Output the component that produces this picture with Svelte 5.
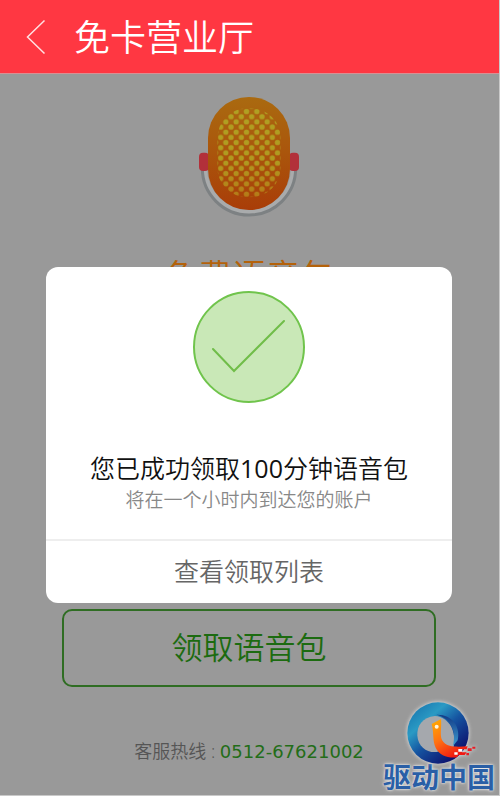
<script>
    let showDialog = $state(true);

    const hotline = '0512-67621002';
    const minutes = 100;

    function openDialog() {
        showDialog = true;
    }

    function closeDialog() {
        showDialog = false;
    }
</script>

<div class="screen">
    <header>
        <button class="back" aria-label="返回">
            <svg viewBox="0 0 20 36" width="20" height="36">
                <path d="M18.500 1.500 L1.500 18 L18.500 34.500" />
            </svg>
        </button>
        <h1>免卡营业厅</h1>
    </header>

    <main>
        <svg class="mic" viewBox="54 33 306 372" width="102" height="124" aria-hidden="true">
            <defs>
                <linearGradient id="micBody" x1="0" y1="0" x2="0" y2="1">
                    <stop offset="0" stop-color="#aa6a10" />
                    <stop offset="0.5" stop-color="#aa550c" />
                    <stop offset="1" stop-color="#a93d08" />
                </linearGradient>
                <linearGradient id="micDots" x1="0" y1="0" x2="0" y2="1">
                    <stop offset="0" stop-color="#b0a022" />
                    <stop offset="0.6" stop-color="#b09a20" />
                    <stop offset="1" stop-color="#b57a18" />
                </linearGradient>
                <pattern id="dots" x="184" y="64" width="31" height="31" patternUnits="userSpaceOnUse">
                    <circle cx="15.500" cy="15.500" r="8" fill="#fff" />
                    <circle cx="0" cy="0" r="8" fill="#fff" />
                    <circle cx="31" cy="0" r="8" fill="#fff" />
                    <circle cx="0" cy="31" r="8" fill="#fff" />
                    <circle cx="31" cy="31" r="8" fill="#fff" />
                </pattern>
                <mask id="dotMask">
                    <rect x="112" y="70" width="190" height="267" rx="90" fill="url(#dots)" />
                </mask>
            </defs>
            <path d="M74 248 A133 133 0 0 0 340 248" fill="none" stroke="#a9abac" stroke-width="14" />
            <path d="M67 250 A140 140 0 0 0 347 250" fill="none" stroke="#7d8183" stroke-width="9" />
            <rect x="57" y="203" width="30" height="55" rx="12" fill="#b2303a" />
            <rect x="327" y="203" width="30" height="55" rx="12" fill="#b2303a" />
            <rect x="84" y="36" width="246" height="339" rx="123" fill="url(#micBody)" />
            <rect x="112" y="70" width="190" height="267" fill="url(#micDots)" mask="url(#dotMask)" />
        </svg>
        <h2>免费语音包</h2>
        <button class="claim" onclick={openDialog}>领取语音包</button>
        <p class="hotline">客服热线 : <a href="tel:{hotline}">{hotline}</a></p>
    </main>

    {#if showDialog}
        <div class="dialog" role="dialog" aria-labelledby="dialog-title">
            <div class="content">
                <svg class="check" viewBox="0 0 114 114" width="114" height="114" aria-hidden="true">
                    <circle cx="57" cy="57" r="55" />
                    <path d="M21 59 L42 81 L92 31" />
                </svg>
                <h3 id="dialog-title">您已成功领取<span>{minutes}</span>分钟语音包</h3>
                <p>将在一个小时内到达您的账户</p>
            </div>
            <button class="list" onclick={closeDialog}>查看领取列表</button>
        </div>
    {/if}

    <div class="watermark">
        <svg viewBox="90 30 225 207" width="75" height="69" aria-hidden="true">
            <defs>
                <linearGradient id="ring" x1="0.1" y1="0.15" x2="0.75" y2="0.9">
                    <stop offset="0" stop-color="#1c7fb4" />
                    <stop offset="0.25" stop-color="#2a9ac4" />
                    <stop offset="0.55" stop-color="#1553a0" />
                    <stop offset="1" stop-color="#0d1470" />
                </linearGradient>
                <linearGradient id="inner" x1="0" y1="0" x2="0" y2="1">
                    <stop offset="0" stop-color="#123a86" />
                    <stop offset="1" stop-color="#3e9bd0" />
                </linearGradient>
                <linearGradient id="bird" x1="0" y1="0" x2="0.6" y2="1">
                    <stop offset="0" stop-color="#ffb000" />
                    <stop offset="0.5" stop-color="#ff7212" />
                    <stop offset="1" stop-color="#f01812" />
                </linearGradient>
            </defs>
            <circle cx="201" cy="135" r="92" fill="url(#ring)" />
            <path d="M192 84 C154 87 137 115 139 143 C142 176 167 195 197 192 L248 177 C257 133 236 87 192 84 Z" fill="#a5a8ad" />
            <path d="M196 80 C242 78 270 115 260 157 L246 174 C257 128 240 91 196 80 Z" fill="url(#inner)" />
            <path d="M182 108 L210 93 C213 121 203 149 218 163 C232 178 257 177 290 175 L287 184 L274 184 L272 193 L287 193 L281 201 L263 201 L258 208 C231 211 204 202 194 179 C184 158 189 133 182 108 Z" fill="url(#bird)" />
            <circle cx="197" cy="116" r="6" fill="#fff5dd" />
            <path d="M262 183 h12 v8 h-12 z M250 193 h10 v7 h-10 z" fill="#fff" />
            <path d="M290 181 h12 v8 h-12 z M304 176 h9 v6 h-9 z M286 195 h8 v7 h-8 z" fill="#e81c24" />
        </svg>
        <span>驱动中国</span>
    </div>
</div>

<style>
    :global(body) {
        margin: 0;
        background: #c9c9c9;
    }

    .screen {
        position: relative;
        display: flex;
        flex-direction: column;
        min-height: calc(100vh - 1px);
        margin: 0 1px 1px 0;
        background: #999;
        font-family: 'Open Sans', 'Noto Sans CJK SC', sans-serif;
        font-weight: 350;
    }

    h1, h2, h3, p {
        margin: 0;
        font-weight: 350;
    }

    button {
        padding: 0;
        border: none;
        background: none;
        font: inherit;
        cursor: pointer;
    }

    header {
        display: flex;
        align-items: center;
        gap: 28px;
        height: 73px;
        padding-left: 26px;
        border-bottom: 1px solid #d98f93;
        background: #ff3742;
        color: #fff;
    }

    .back {
        display: flex;
    }

    .back path {
        fill: none;
        stroke: #ffe1e2;
        stroke-width: 1.5;
    }

    h1 {
        padding-top: 2px;
        font-size: 36px;
        line-height: 72px;
    }

    main {
        display: flex;
        flex: 1;
        flex-direction: column;
        align-items: center;
        padding: 22px 63px 0 62px;
    }

    .mic {
        flex-shrink: 0;
    }

    h2 {
        margin-top: 32px;
        color: #b4620b;
        font-size: 34px;
        line-height: 48px;
    }

    .claim {
        width: 100%;
        height: 78px;
        margin-top: 309px;
        padding-bottom: 6px;
        border: 2px solid #2f6d23;
        border-radius: 10px;
        color: #1c6b10;
        font-size: 31px;
    }

    .hotline {
        margin-top: 50px;
        color: #555;
        font-size: 18px;
        line-height: 28px;
    }

    .hotline a {
        color: #236d18;
        font-family: 'DejaVu Sans', sans-serif;
        font-weight: 400;
        text-decoration: none;
    }

    .dialog {
        position: absolute;
        top: 267px;
        right: 47px;
        left: 46px;
        overflow: hidden;
        border-radius: 12px;
        background: #fff;
        text-align: center;
    }

    .content {
        display: flex;
        flex-direction: column;
        align-items: center;
        padding: 23px 0 25px;
        border-bottom: 2px solid #eee;
    }

    .check {
        margin-bottom: 46px;
    }

    .check circle {
        fill: #c9e8b7;
        stroke: #70c44c;
        stroke-width: 2;
    }

    .check path {
        fill: none;
        stroke: #70bd49;
        stroke-width: 2;
        stroke-linecap: round;
    }

    h3 {
        color: #111;
        font-size: 25px;
        line-height: 36px;
    }

    h3 span {
        font-weight: 400;
    }

    .content p {
        color: #888;
        font-size: 19px;
        line-height: 28px;
    }

    .list {
        width: 100%;
        height: 62px;
        padding-bottom: 4px;
        color: #666;
        font-size: 25px;
    }

    .watermark {
        position: absolute;
        right: 4px;
        bottom: 0;
        display: flex;
        flex-direction: column;
        align-items: center;
    }

    .watermark svg {
        filter: drop-shadow(0 0 2px #e8e8e8);
    }

    .watermark span {
        padding-bottom: 4px;
        color: #2a5fa6;
        font-family: 'Liberation Sans', 'Noto Sans CJK SC', sans-serif;
        font-size: 28px;
        font-weight: 700;
        line-height: 24px;
        text-shadow: 0 0 2px #fff, 0 0 4px #ddd;
    }
</style>
